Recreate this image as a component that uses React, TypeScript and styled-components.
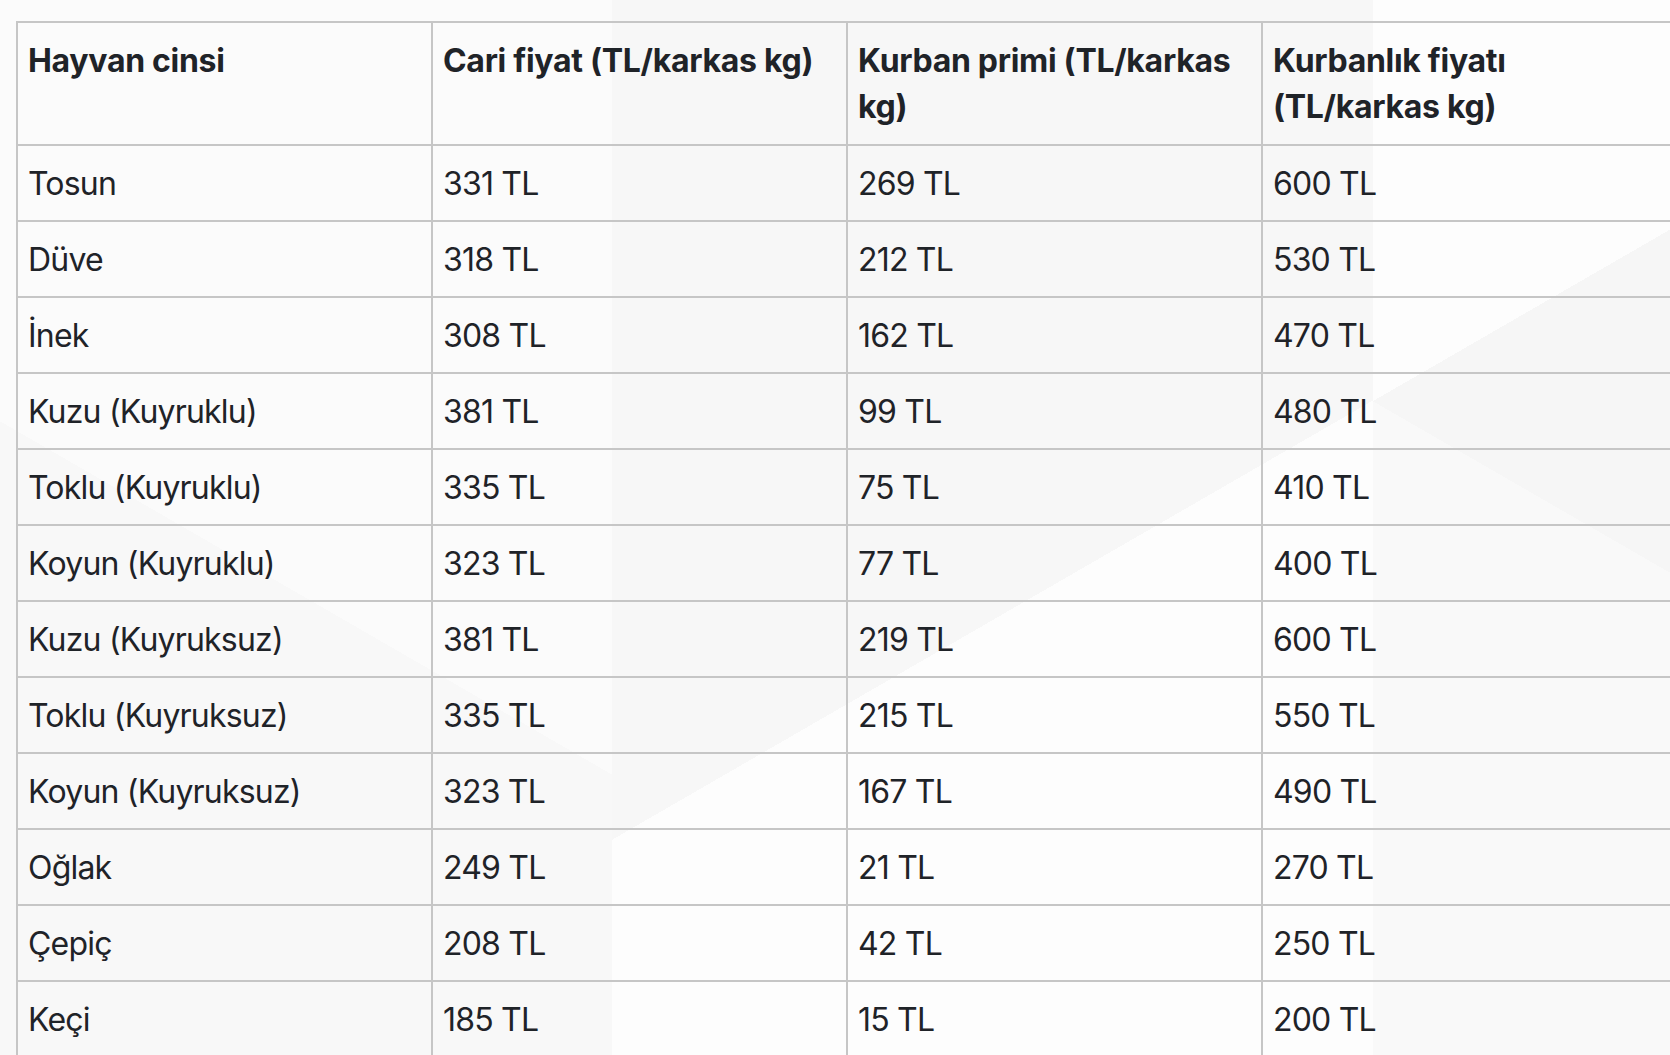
import React from "react";
import styled, {createGlobalStyle} from "styled-components";

// faint low-poly backdrop: three vertical bands split by 30deg diagonals
const GlobalStyle = createGlobalStyle`
    html, body {
        margin: 0;
        padding: 0;
        height: 100%;
        overflow: hidden;
    }

    body {
        font-family: Inter, "Noto Sans", "Liberation Sans", sans-serif;
        color: #1f2328;
        background-color: #f9f9f9;
        background-image:
            linear-gradient(150deg, #f7f7f7 0 56.2%, #fdfdfd 56.2%),
            linear-gradient(210deg, transparent 0 46.7%, #f9f9f9 46.7%),
            linear-gradient(150deg, #fdfdfd 0 32.7%, #f6f6f6 32.7%),
            linear-gradient(30deg, #f8f8f8 0 45%, #fbfbfb 45%);
        background-repeat: no-repeat;
        background-position: 612px 0, 1373px 0, 1373px 0, 0 0;
        background-size: 761px 100%, 297px 100%, 297px 100%, 612px 100%;
    }
`

const Page = styled.div`
    padding: 21px 0 0 16px;
`

const Table = styled.table`
    border-collapse: collapse;
    table-layout: fixed;
    width: 1660px;
    font-size: 32px;
    line-height: 46px;
    letter-spacing: -0.8px;
`

const HeadCell = styled.th`
    border: 2px solid #c6c6c6;
    padding: 15px 10px 14px;
    text-align: left;
    vertical-align: top;
    font-weight: 700;
    letter-spacing: -0.3px;
`

const Cell = styled.td`
    border: 2px solid #c6c6c6;
    padding: 15px 10px 13px;
    text-align: left;
    font-weight: 400;
    white-space: nowrap;
`

const columns = [
    "Hayvan cinsi",
    "Cari fiyat (TL/karkas kg)",
    "Kurban primi (TL/karkas kg)",
    "Kurbanlık fiyatı (TL/karkas kg)",
];

const rows: [string, number, number, number][] = [
    ["Tosun", 331, 269, 600],
    ["Düve", 318, 212, 530],
    ["İnek", 308, 162, 470],
    ["Kuzu (Kuyruklu)", 381, 99, 480],
    ["Toklu (Kuyruklu)", 335, 75, 410],
    ["Koyun (Kuyruklu)", 323, 77, 400],
    ["Kuzu (Kuyruksuz)", 381, 219, 600],
    ["Toklu (Kuyruksuz)", 335, 215, 550],
    ["Koyun (Kuyruksuz)", 323, 167, 490],
    ["Oğlak", 249, 21, 270],
    ["Çepiç", 208, 42, 250],
    ["Keçi", 185, 15, 200],
];

const App = () => {
    return (
        <>
            <GlobalStyle/>
            <Page>
                <Table>
                    <colgroup>
                        {columns.map((c) => <col key={c} style={{width: 415}}/>)}
                    </colgroup>
                    <thead>
                    <tr>
                        {columns.map((c) => <HeadCell key={c}>{c}</HeadCell>)}
                    </tr>
                    </thead>
                    <tbody>
                    {rows.map((r) => (
                        <tr key={r[0]}>
                            <Cell>{r[0]}</Cell>
                            <Cell>{r[1]} TL</Cell>
                            <Cell>{r[2]} TL</Cell>
                            <Cell>{r[3]} TL</Cell>
                        </tr>
                    ))}
                    </tbody>
                </Table>
            </Page>
        </>
    )
}

export default App;
